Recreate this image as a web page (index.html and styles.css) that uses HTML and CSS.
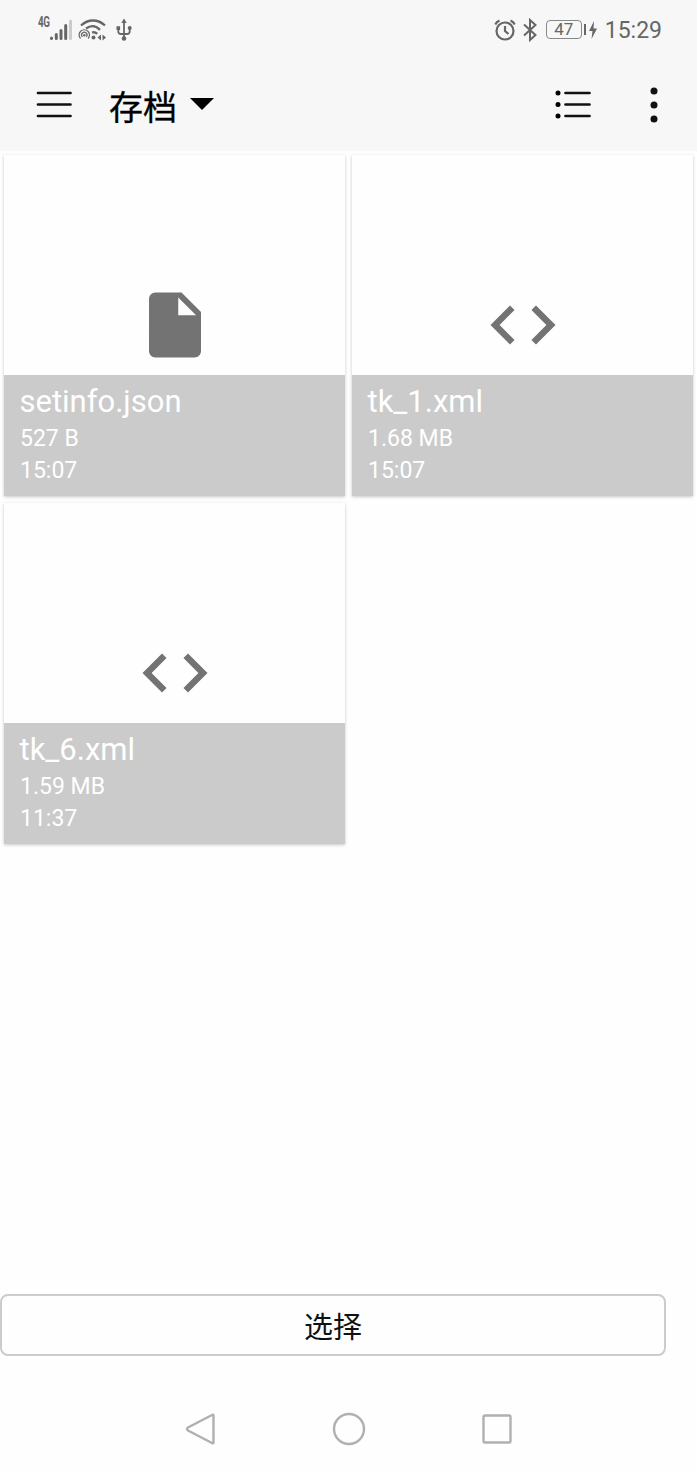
FILE: index.html
```html
<!DOCTYPE html>
<html lang="zh-CN">
<head>
    <meta charset="UTF-8">
    <meta name="viewport" content="width=device-width, initial-scale=1.0">
    <title>存档</title>
    <link rel="stylesheet" href="styles.css">
</head>
<body>
    <header class="header">
        <div class="status-bar">
            <div class="status-left">
                <span class="network">4G</span>
                <svg class="signal" width="24" height="24" viewBox="0 0 24 24">
                    <path d="M2.500 20v.5M7.300 16.500v4M12 12.500v8M16.700 7.500v13" />
                    <path class="weak" d="M21.500 3v17.500" />
                </svg>
                <svg class="wifi" width="30" height="24" viewBox="0 0 30 24">
                    <path class="arc" d="M3 7.500C10 .8 20 .8 27 7.500M8 10.500c5-3.600 9.500-3.300 14 1.400M14 14.500c2-.6 3.800 0 5.200 1.400" />
                    <path class="hotspot" d="M2.500 20.500a5.200 5.200 0 1 1 7.600 0M4.300 18.800a2.700 2.700 0 1 1 4 0" />
                    <circle cx="6.300" cy="17.300" r="1.200" />
                    <circle cx="15.500" cy="19.500" r="2" />
                    <path d="M23 16.500v6l-3.500-3zM24.500 16.500v6l3.500-3z" />
                </svg>
                <svg class="usb" width="16" height="24" viewBox="0 0 16 24">
                    <path class="line" d="M8 4v17M2.300 10v3.500Q2.300 16 5 16h6q2.700 0 2.700-2.500V10" />
                    <path d="M8 .5l2.700 4.500H5.300zM.5 8.300h3.600v3.600H.5z" />
                    <circle cx="13.700" cy="10" r="2" />
                    <circle cx="8" cy="20.500" r="2.300" />
                </svg>
            </div>
            <div class="status-right">
                <svg class="alarm" width="22" height="24" viewBox="0 0 22 24">
                    <circle cx="11" cy="13" r="8.500" />
                    <path d="M11 8v5l3.500 3" />
                    <path d="M1.300 6.500Q2.500 3.500 5.500 2.600M20.700 6.500Q19.500 3.500 16.500 2.600" />
                </svg>
                <svg class="bluetooth" width="14" height="24" viewBox="0 0 14 24">
                    <path d="M1 6.500l11.500 10.500-5.500 5V2l5.500 5L1 17.500" />
                </svg>
                <span class="battery">47</span>
                <svg class="bolt" width="10" height="18" viewBox="0 0 10 18">
                    <path d="M6 0L1 10h3.500L3.500 18 9 7.500H5.500z" />
                </svg>
                <span class="clock">15:29</span>
            </div>
        </div>
        <div class="toolbar">
            <svg class="menu" width="36" height="30" viewBox="0 0 36 30">
                <path d="M2 3h32.500M2 14.500h32.500M2 26h32.500" />
            </svg>
            <h1>存档</h1>
            <svg class="dropdown" width="24" height="12" viewBox="0 0 24 12">
                <path d="M0 0h24L12 12z" />
            </svg>
            <svg class="list" width="38" height="30" viewBox="0 0 38 30">
                <path d="M11.500 3h24M11.500 14.500h24M11.500 26h24" />
                <circle cx="4" cy="3" r="2.500" />
                <circle cx="4" cy="14.500" r="2.500" />
                <circle cx="4" cy="26" r="2.500" />
            </svg>
            <svg class="more" width="8" height="36" viewBox="0 0 8 36">
                <circle cx="4" cy="4" r="3.500" />
                <circle cx="4" cy="18" r="3.500" />
                <circle cx="4" cy="32" r="3.500" />
            </svg>
        </div>
    </header>

    <main class="files">
        <div class="card">
            <div class="preview">
                <svg width="78" height="78" viewBox="0 0 24 24">
                    <path d="M6 2c-1.100 0-1.990.9-1.990 2L4 20c0 1.100.890 2 1.990 2H18c1.100 0 2-.9 2-2V8l-6-6H6zm7 7V3.500L18.500 9H13z" />
                </svg>
            </div>
            <div class="info">
                <h2>setinfo.json</h2>
                <p>527 B</p>
                <p>15:07</p>
            </div>
        </div>
        <div class="card">
            <div class="preview">
                <svg width="78" height="78" viewBox="0 0 24 24">
                    <path d="M9.400 16.600L4.800 12l4.600-4.600L8 6l-6 6 6 6 1.400-1.400zm5.200 0l4.600-4.600-4.600-4.600L16 6l6 6-6 6-1.400-1.400z" />
                </svg>
            </div>
            <div class="info">
                <h2>tk_1.xml</h2>
                <p>1.68 MB</p>
                <p>15:07</p>
            </div>
        </div>
        <div class="card">
            <div class="preview">
                <svg width="78" height="78" viewBox="0 0 24 24">
                    <path d="M9.400 16.600L4.800 12l4.600-4.600L8 6l-6 6 6 6 1.400-1.400zm5.200 0l4.600-4.600-4.600-4.600L16 6l6 6-6 6-1.400-1.400z" />
                </svg>
            </div>
            <div class="info">
                <h2>tk_6.xml</h2>
                <p>1.59 MB</p>
                <p>11:37</p>
            </div>
        </div>
    </main>

    <button class="select-btn">选择</button>

    <nav class="nav-bar">
        <svg width="36" height="36" viewBox="0 0 36 36">
            <path d="M30.500 4.500v27q0 1.500-1.500.5L5 19.500q-2-1.500 0-3L29 4q1.500-1 1.500.5z" />
        </svg>
        <svg width="36" height="36" viewBox="0 0 36 36">
            <circle cx="18" cy="18" r="15" />
        </svg>
        <svg width="36" height="36" viewBox="0 0 36 36">
            <rect x="4.500" y="4.500" width="27" height="27" rx="1.500" />
        </svg>
    </nav>
</body>
</html>
```
FILE: styles.css
```css
* { box-sizing: border-box; }
body { margin: 0; height: 1471px; display: flex; flex-direction: column; background: #fefefe; font-family: Roboto, "Noto Sans CJK SC", sans-serif; }
h1, h2, p { margin: 0; font-weight: normal; }
svg { display: block; flex: none; }

.header { height: 151px; background: #f7f7f7; }

.status-bar { height: 59px; padding: 0 35px 0 38px; display: flex; justify-content: space-between; align-items: center; color: #666; }
.status-left, .status-right { display: flex; align-items: center; }
.status-bar svg { fill: #666; stroke: none; }
.network { width: 11px; height: 25px; font-size: 12px; line-height: 10px; font-weight: bold; letter-spacing: -0.5px; transform: scale(0.82, 1.15); transform-origin: 0 0; }
.status-bar .signal { fill: none; stroke: #666; stroke-width: 3; stroke-linecap: round; }
.status-bar .signal .weak { stroke: #ccc; }
.wifi { margin-left: 5px; }
.wifi .arc { fill: none; stroke: #666; stroke-width: 2.3; }
.wifi .hotspot { fill: none; stroke: #666; stroke-width: 1.2; }
.usb { margin-left: 8px; }
.usb .line { fill: none; stroke: #666; stroke-width: 1.8; }
.status-bar .alarm { fill: none; stroke: #666; stroke-width: 2.2; }
.status-bar .bluetooth { margin-left: 7px; fill: none; stroke: #666; stroke-width: 2; }
.battery { position: relative; width: 36px; height: 19px; margin-left: 9px; border: 1.5px solid #888; border-radius: 4px; font-size: 17px; line-height: 17px; text-align: center; }
.battery::after { content: ""; position: absolute; right: -5px; top: 3px; width: 2px; height: 11px; background: #666; }
.bolt { margin-left: 6px; }
.clock { margin-left: 7px; font-size: 23px; line-height: 28px; padding-top: 2px; }

.toolbar { height: 92px; padding: 0 39px 0 36px; display: flex; align-items: center; }
.menu, .list { stroke: #111; stroke-width: 2.7; stroke-linecap: round; }
.list circle { stroke: none; }
.toolbar h1 { margin: 0 13px 0 37px; padding-top: 5px; font-size: 34px; line-height: 50px; color: #000; -webkit-text-stroke: 0.3px #000; }
.dropdown { margin-bottom: 2px; }
.list { margin-left: auto; }
.more { margin-left: 58px; fill: #111; }

.files { flex: 1; display: grid; grid-template-columns: 341px 341px; grid-auto-rows: 341px; align-content: start; gap: 7px; padding: 4px 4px 0; }
.card { background: #fefefe; box-shadow: 0 1px 3px rgba(0,0,0,0.22); }
.preview { height: 220px; padding: 0 0 11px; display: flex; align-items: flex-end; justify-content: center; }
.preview svg { fill: #737373; }
.info { height: 121px; padding: 8px 16px; background: #cbcbcb; color: #fff; }
.info h2 { margin: 0 0 3px -0.5px; font-size: 31px; line-height: 37px; }
.info p { font-size: 23px; line-height: 31.5px; }

.select-btn { width: 666px; height: 62px; padding: 0; border: 2px solid #ccc; border-radius: 8px; background: #fefefe; color: #111; font-family: inherit; font-size: 29px; }
.nav-bar { height: 115px; padding: 31px 0 0; display: flex; justify-content: center; align-items: center; gap: 112px; }
.nav-bar svg { fill: none; stroke: #b0b0b0; stroke-width: 2.4; }
```
